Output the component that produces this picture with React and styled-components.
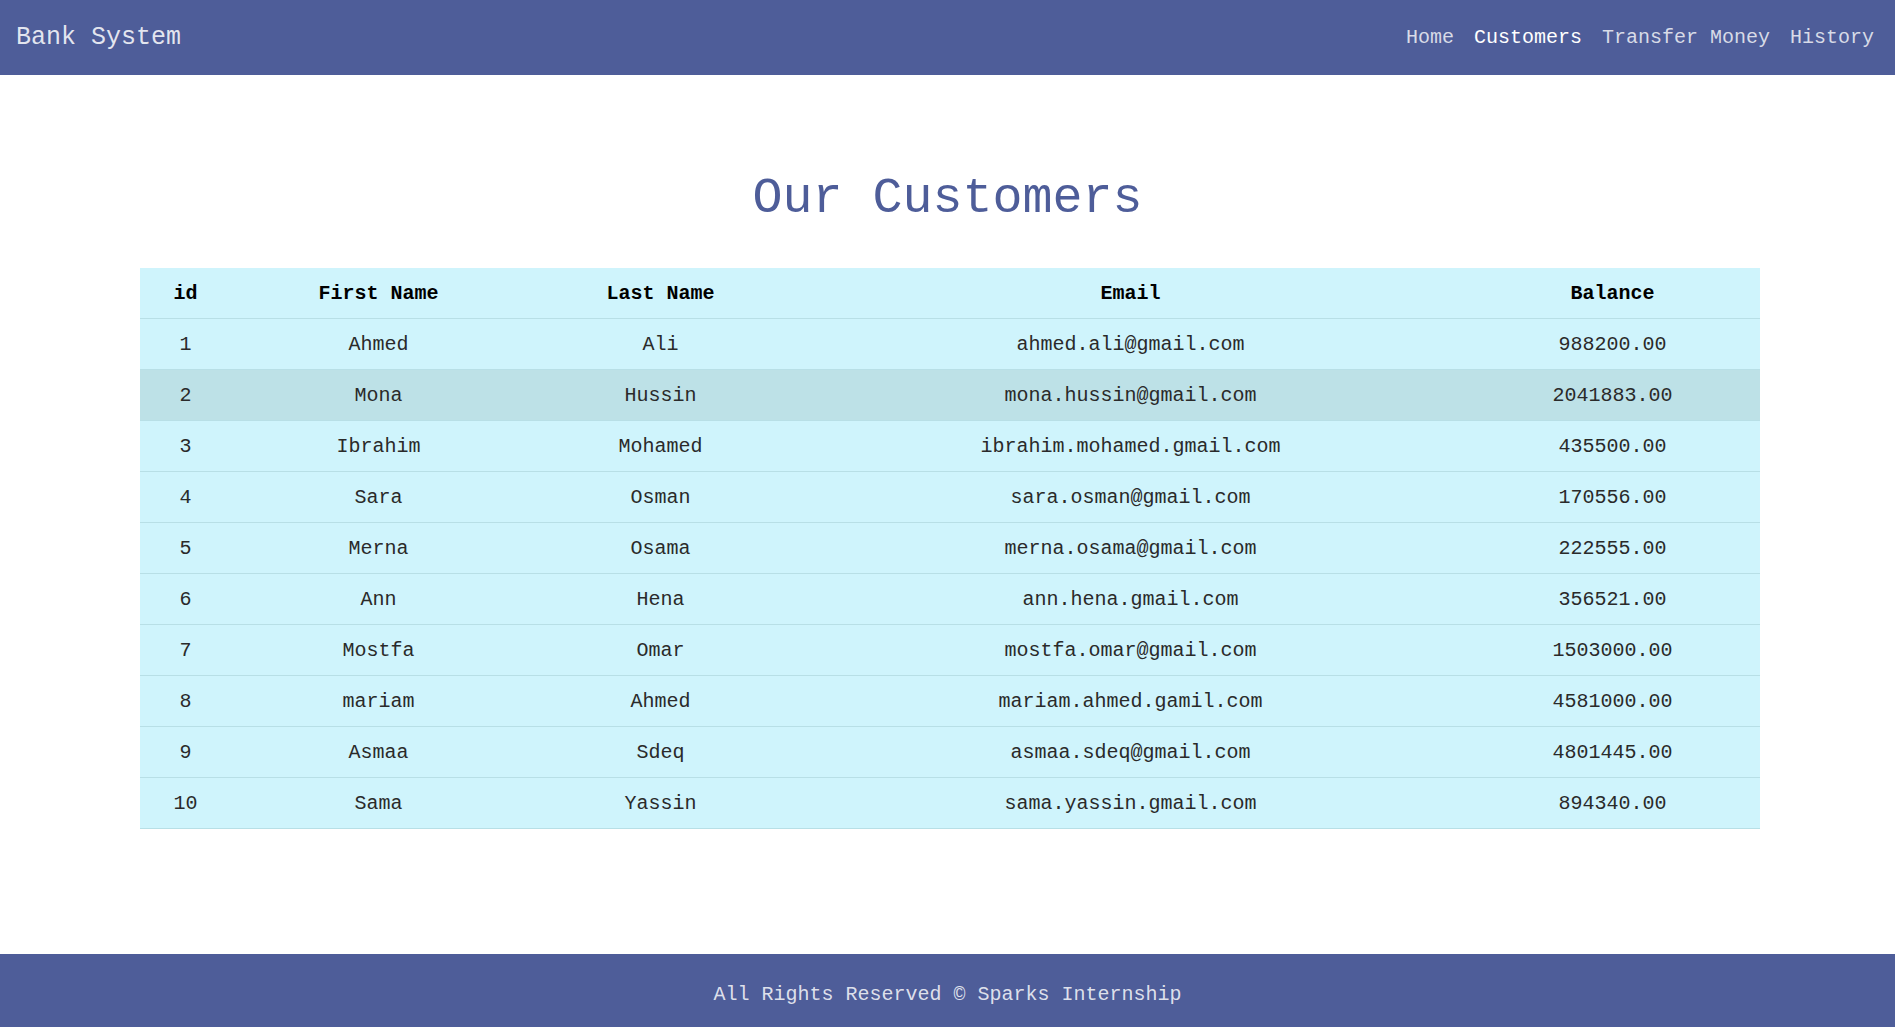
import styled, { createGlobalStyle } from "styled-components";

const customers = [
  { id: 1, first: "Ahmed", last: "Ali", email: "ahmed.ali@gmail.com", balance: "988200.00" },
  { id: 2, first: "Mona", last: "Hussin", email: "mona.hussin@gmail.com", balance: "2041883.00" },
  { id: 3, first: "Ibrahim", last: "Mohamed", email: "ibrahim.mohamed.gmail.com", balance: "435500.00" },
  { id: 4, first: "Sara", last: "Osman", email: "sara.osman@gmail.com", balance: "170556.00" },
  { id: 5, first: "Merna", last: "Osama", email: "merna.osama@gmail.com", balance: "222555.00" },
  { id: 6, first: "Ann", last: "Hena", email: "ann.hena.gmail.com", balance: "356521.00" },
  { id: 7, first: "Mostfa", last: "Omar", email: "mostfa.omar@gmail.com", balance: "1503000.00" },
  { id: 8, first: "mariam", last: "Ahmed", email: "mariam.ahmed.gamil.com", balance: "4581000.00" },
  { id: 9, first: "Asmaa", last: "Sdeq", email: "asmaa.sdeq@gmail.com", balance: "4801445.00" },
  { id: 10, first: "Sama", last: "Yassin", email: "sama.yassin.gmail.com", balance: "894340.00" },
];

const links = ["Home", "Customers", "Transfer Money", "History"];

export default function App() {
  return (
    <>
      <GlobalStyle />
      <Page>
        <Navbar>
          <Brand>Bank System</Brand>
          <NavLinks>
            {links.map(l => (
              <NavLink key={l} $active={l === "Customers"}>{l}</NavLink>
            ))}
          </NavLinks>
        </Navbar>
        <Main>
          <Title>Our Customers</Title>
          <Table>
            <colgroup>
              <col style={{ width: 92 }} />
              <col style={{ width: 294 }} />
              <col style={{ width: 270 }} />
              <col style={{ width: 670 }} />
              <col style={{ width: 294 }} />
            </colgroup>
            <thead>
              <tr>
                <Th>id</Th>
                <Th>First Name</Th>
                <Th>Last Name</Th>
                <Th>Email</Th>
                <Th>Balance</Th>
              </tr>
            </thead>
            <tbody>
              {customers.map(c => (
                <Row key={c.id} $hover={c.id === 2}>
                  <Td>{c.id}</Td>
                  <Td>{c.first}</Td>
                  <Td>{c.last}</Td>
                  <Td>{c.email}</Td>
                  <Td>{c.balance}</Td>
                </Row>
              ))}
            </tbody>
          </Table>
        </Main>
        <Footer>All Rights Reserved © Sparks Internship</Footer>
      </Page>
    </>
  );
}

const GlobalStyle = createGlobalStyle`
  * { box-sizing: border-box; }
  body {
    margin: 0;
    font-family: "Liberation Mono", "Courier New", monospace;
    background: #fff;
  }
`;

const Page = styled.div`
  min-height: 100vh;
  display: flex;
  flex-direction: column;
`;

const Navbar = styled.nav`
  height: 75px;
  background: #4e5d99;
  display: flex;
  align-items: center;
  justify-content: space-between;
  padding: 0 11px 0 16px;
`;

const Brand = styled.span`
  font-size: 25px;
  color: rgba(255, 255, 255, 0.85);
`;

const NavLinks = styled.div`
  display: flex;
`;

const NavLink = styled.a`
  font-size: 20px;
  padding: 0 10px;
  color: ${p => (p.$active ? "#fff" : "rgba(255, 255, 255, 0.78)")};
  cursor: pointer;
`;

const Main = styled.main`
  flex: 1;
  padding-top: 94px;
`;

const Title = styled.h1`
  margin: 0 0 39px;
  font-size: 50px;
  line-height: 60px;
  font-weight: 400;
  text-align: center;
  color: #4e5d99;
`;

const Table = styled.table`
  width: 1620px;
  margin: 0 auto;
  border-collapse: collapse;
  table-layout: fixed;
  background: #cff4fc;
  transform: translateX(2px);
`;

const Th = styled.th`
  font-size: 20px;
  font-weight: 700;
  line-height: 26px;
  padding: 13px 8px 11px;
  color: #000;
  border-bottom: 1px solid #b8dfe6;
  text-align: center;
`;

const Row = styled.tr`
  background: ${p => (p.$hover ? "#bde1e7" : "transparent")};
`;

const Td = styled.td`
  font-size: 20px;
  line-height: 26px;
  padding: 13px 8px 11px;
  color: #2a2a2a;
  border-bottom: 1px solid #b8dfe6;
  text-align: center;
`;

const Footer = styled.footer`
  height: 73px;
  background: #4e5d99;
  color: rgba(255, 255, 255, 0.82);
  font-size: 20px;
  line-height: 26px;
  padding-top: 28px;
  text-align: center;
`;
